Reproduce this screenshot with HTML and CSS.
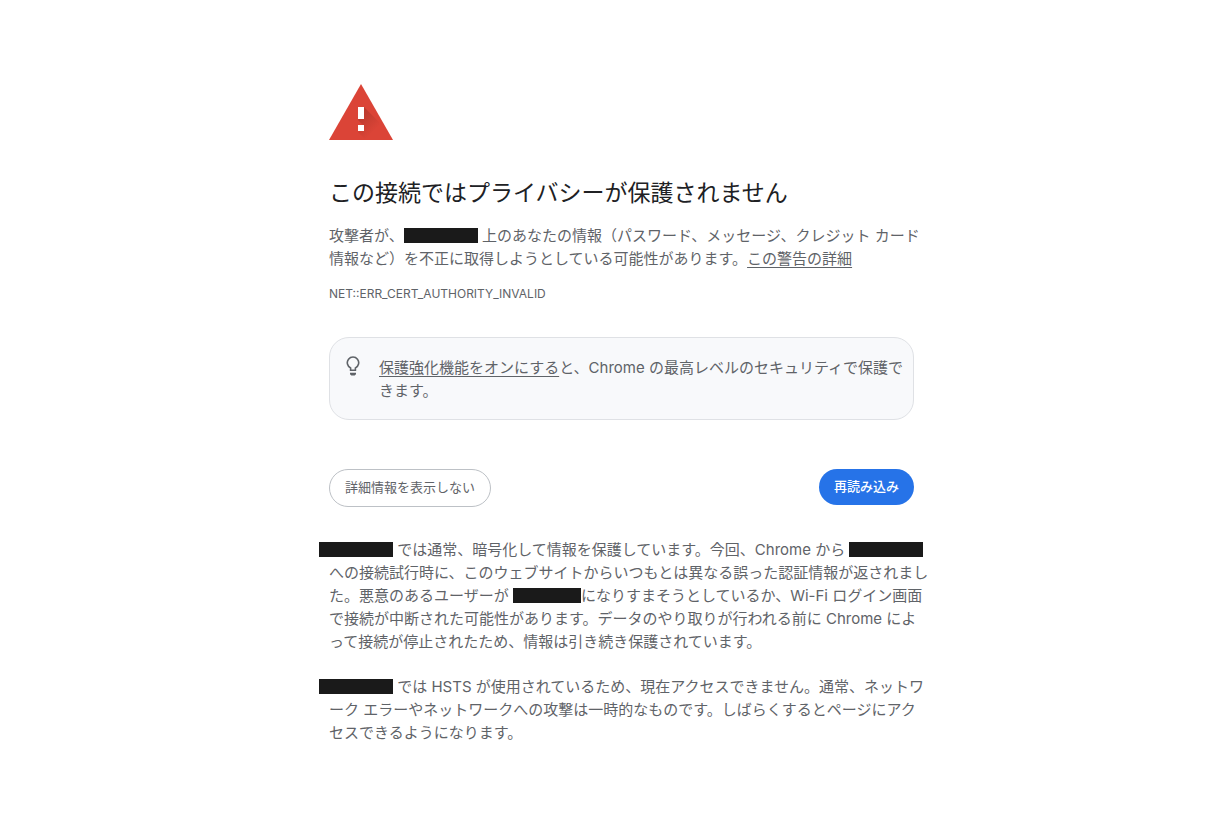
FILE: index.html
```html
<!DOCTYPE html>
<html lang="ja">
<head>
  <meta charset="UTF-8">
  <meta name="viewport" content="width=device-width, initial-scale=1.0">
  <title>プライバシー エラー</title>
  <link rel="stylesheet" href="styles.css">
</head>
<body>
  <main class="interstitial">
    <svg class="warning-icon" viewBox="0 0 64 56" aria-hidden="true">
      <defs>
        <linearGradient id="shade" gradientUnits="userSpaceOnUse" x1="32" y1="28" x2="48" y2="44">
          <stop offset="0" stop-color="#b93a2e"/>
          <stop offset="1" stop-color="#db4437"/>
        </linearGradient>
      </defs>
      <path fill="#db4437" d="M32 0l32 56H0z"/>
      <path fill="url(#shade)" d="M35 23l15 15 8 18H37l-8-8 6-6-6-6z"/>
      <path fill="#fff" d="M29 23h6v12h-6zM29 41h6v6h-6z"/>
    </svg>

    <h1>この接続ではプライバシーが保護されません</h1>
    <p class="text">攻撃者が、<span class="host"></span> 上のあなたの情報（パスワード、メッセージ、クレジット カード<br>情報など）を不正に取得しようとしている可能性があります。<a href="#">この警告の詳細</a></p>
    <div class="error-code">NET::ERR_CERT_AUTHORITY_INVALID</div>

    <div class="promo">
      <svg class="bulb-icon" viewBox="0 0 14 20" aria-hidden="true">
        <path fill="none" stroke="#5f6368" stroke-width="1.600" d="M4.600 14.200v-2.300A5.700 5.700 0 1 1 9.400 11.900v2.300z"/>
        <path fill="#5f6368" d="M4 16.800h6v1.400l-1.300 1.200H5.300L4 18.200z"/>
      </svg>
      <p class="text"><a href="#">保護強化機能をオンにする</a>と、Chrome の最高レベルのセキュリティで保護で<br>きます。</p>
    </div>

    <div class="buttons">
      <button class="details-button" type="button">詳細情報を表示しない</button>
      <button class="reload-button" type="button">再読み込み</button>
    </div>

    <div class="details">
      <p class="text"><span class="host outdent"></span> では通常、暗号化して情報を保護しています。今回、Chrome から <span class="host"></span><br>への接続試行時に、このウェブサイトからいつもとは異なる誤った認証情報が返されまし<br>た。悪意のあるユーザーが <span class="host short"></span>になりすまそうとしているか、Wi-Fi ログイン画面<br>で接続が中断された可能性があります。データのやり取りが行われる前に Chrome によ<br>って接続が停止されたため、情報は引き続き保護されています。</p>
      <p class="text"><span class="host outdent"></span> では HSTS が使用されているため、現在アクセスできません。通常、ネットワ<br>ーク エラーやネットワークへの攻撃は一時的なものです。しばらくするとページにアク<br>セスできるようになります。</p>
    </div>
  </main>
</body>
</html>
```

FILE: styles.css
```css
body {
  margin: 0;
  padding: 84px 0 0 27px;
  background: #fff;
  color: #5f6368;
  font-family: Inter, "Noto Sans CJK JP", sans-serif;
  font-size: 15px;
  line-height: 23px;
}
.interstitial {
  max-width: 585px;
  margin: 0 auto;
}
.warning-icon {
  display: block;
  width: 64px;
  height: 56px;
}
h1 {
  margin: 36px 0 14px;
  color: #202124;
  font-size: 23px;
  font-weight: 400;
  line-height: 34px;
}
.text {
  margin: 0;
  white-space: nowrap;
}
a {
  color: inherit;
  text-underline-offset: 3px;
}
.host {
  display: inline-block;
  width: 74px;
  height: 15px;
  background: #1a1a1a;
  vertical-align: -2px;
}
.host.short {
  width: 68px;
}
.host.outdent {
  margin-left: -10px;
}
.error-code {
  margin-top: 12px;
  font-size: 12px;
}
.promo {
  display: flex;
  gap: 19px;
  margin-top: 32px;
  padding: 18px 16px 17px;
  border: 1px solid #dfe1e5;
  border-radius: 20px;
  background: #f8f9fb;
}
.bulb-icon {
  flex: none;
  width: 14px;
  height: 20px;
}
.buttons {
  display: flex;
  justify-content: space-between;
  align-items: flex-start;
  margin-top: 49px;
}
button {
  height: 36px;
  padding: 0 15px 3px;
  border: none;
  border-radius: 20px;
  font-family: inherit;
  font-size: 13px;
}
.details-button {
  height: 38px;
  border: 1px solid #bdc1c6;
  background: #fff;
  color: #5f6368;
}
.reload-button {
  background: #2673e8;
  color: #fff;
  font-weight: 500;
}
.details {
  display: grid;
  gap: 22px;
  margin-top: 31px;
}
```
